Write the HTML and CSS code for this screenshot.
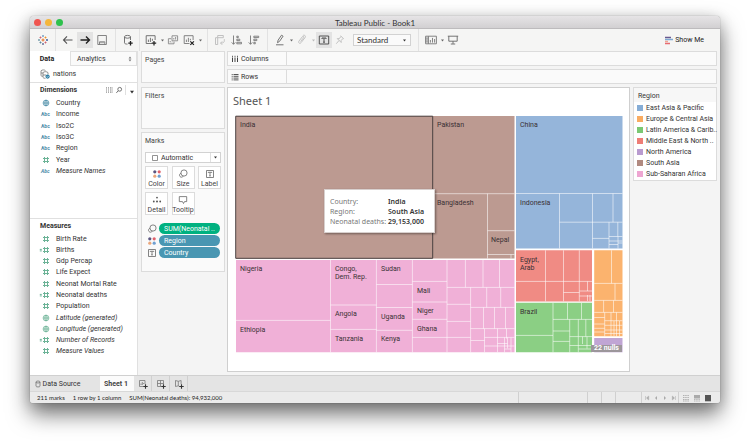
FILE: index.html
```html
<!DOCTYPE html>
<html lang="en">
<head>
<meta charset="utf-8">
<title>Tableau Public - Book1</title>
<link rel="stylesheet" href="styles.css">
</head>
<body>
<svg class="defs" aria-hidden="true">
  <symbol id="hash" viewBox="0 0 8 8"><path d="M2.500 1v6M5.500 1v6M1 2.500h6M1 5.500h6" fill="none" stroke="currentColor" stroke-width="1"/></symbol>
  <symbol id="eqhash" viewBox="0 0 11 8"><path d="M5.500 1v6M8.500 1v6M4 2.500h6M4 5.500h6M.8 3.400h2M.8 4.900h2" fill="none" stroke="currentColor" stroke-width="1"/></symbol>
  <symbol id="globe" viewBox="0 0 8 8"><g fill="none" stroke="currentColor" stroke-width=".7"><circle cx="4" cy="4" r="2.9"/><ellipse cx="4" cy="4" rx="1.3" ry="2.9"/><path d="M1 4h6M4 1v6"/></g></symbol>
  <symbol id="caret" viewBox="0 0 6 4"><path d="M1 .8h4L3 3.4z" fill="currentColor"/></symbol>
  <symbol id="dots" viewBox="0 0 10 10"><circle cx="2.8" cy="2.8" r="1.6" fill="#5b5580"/><circle cx="7.2" cy="2.8" r="1.6" fill="#e0616b"/><circle cx="2.8" cy="7.2" r="1.6" fill="#eba77c"/><circle cx="7.2" cy="7.2" r="1.6" fill="#6f9fd0"/></symbol>
  <symbol id="size" viewBox="0 0 10 10"><g fill="none" stroke="currentColor" stroke-width=".8"><circle cx="6" cy="4" r="3.1"/><path d="M2.9 4.3a2 2 0 1 0 2.4 2.8"/></g></symbol>
  <symbol id="label" viewBox="0 0 10 10"><path d="M1.500 1.500h7v7h-7zM3.300 4V3.300h3.400V4M5 3.300v3.600M4.200 6.900h1.600" fill="none" stroke="currentColor" stroke-width=".8"/></symbol>
  <symbol id="plus" viewBox="0 0 5 5"><path d="M2.500 .3v4.400M.3 2.500h4.400" stroke="#333" stroke-width="1.1"/></symbol>
</svg>

<div class="window">
  <header class="titlebar">
    <div class="lights"><span class="light close"></span><span class="light min"></span><span class="light max"></span></div>
    <h1>Tableau Public - Book1</h1>
  </header>

  <nav class="toolbar" aria-label="Toolbar">
    <div class="group home"><button type="button" aria-label="Start page"><svg viewBox="0 0 12 12"><g stroke-width=".9"><path d="M6 4.500v3M4.500 6h3" stroke="#e8762d" stroke-width="1.1"/><path d="M6 1v2M5 2h2" stroke="#6a9bc3"/><path d="M6 9v2M5 10h2" stroke="#5b6591"/><path d="M2 5v2M1 6h2" stroke="#7199a6"/><path d="M10 5v2M9 6h2" stroke="#2f5597"/><path d="M3.500 2.500v2M2.500 3.500h2" stroke="#d0606c"/><path d="M8.500 2.500v2M7.500 3.500h2" stroke="#eb912c"/><path d="M3.500 7.500v2M2.500 8.500h2" stroke="#59879b"/><path d="M8.500 7.500v2M7.500 8.500h2" stroke="#d0606c"/></g></svg></button></div>
    <div class="group spaced">
      <button type="button" aria-label="Undo"><svg viewBox="0 0 12 12"><path d="M10.500 6h-9M5 2.400L1.500 6 5 9.600" fill="none" stroke="#555" stroke-width="1.1"/></svg></button>
      <button type="button" class="on" aria-label="Redo"><svg viewBox="0 0 12 12"><path d="M1.500 6h9M7 2.400L10.500 6 7 9.600" fill="none" stroke="#222" stroke-width="1.4"/></svg></button>
      <button type="button" aria-label="Save"><svg viewBox="0 0 12 12"><path d="M1.800 1.500h8.600v9H1.800zM3.500 10.500V7.800h5.300v2.700M5 8v1.300M7 8v1.300" fill="none" stroke="#777" stroke-width=".9"/></svg></button>
    </div>
    <div class="group single"><button type="button" aria-label="New data source"><svg viewBox="0 0 12 12"><path d="M2.500 2.800v6c0 1 1.500 1.300 3 1.300M8.500 6V2.800" fill="none" stroke="#666" stroke-width=".9"/><ellipse cx="5.5" cy="2.8" rx="3" ry="1.4" fill="none" stroke="#666" stroke-width=".9"/><path d="M8.500 7v4.400M6.300 9.200h4.400" stroke="#222" stroke-width="1.3"/></svg></button></div>
    <div class="group sheets">
      <button type="button" aria-label="New worksheet"><svg viewBox="0 0 12 12"><path d="M7 9.500H1.200V1.700h8.900V6M3.400 8V5.600M5.400 8V3.800M7.400 6.800V4.800" fill="none" stroke="#666" stroke-width=".9"/><path d="M9 7v4.400M6.800 9.200h4.400" stroke="#222" stroke-width="1.2"/></svg></button>
      <button type="button" class="drop" aria-label="New worksheet options"><svg><use href="#caret"/></svg></button>
      <button type="button" aria-label="Duplicate"><svg viewBox="0 0 12 12"><path d="M5 6.800V1.800h5.600v5zM4.200 4.700H1.400v5.100H7V7.600M6.800 5.500V4M8.600 5.500V3M3.200 8.400V7M5 8.400V7.700" fill="none" stroke="#888" stroke-width=".9"/></svg></button>
      <button type="button" aria-label="Clear sheet"><svg viewBox="0 0 12 12"><path d="M6.500 9.500H1.200V1.700h8.900V6M3.400 8V5.600M5.400 8V3.800M7.400 6.300V4.800" fill="none" stroke="#777" stroke-width=".9"/><path d="M7.300 7.300l3.600 3.600M10.900 7.300l-3.600 3.600" stroke="#222" stroke-width="1.2"/></svg></button>
      <button type="button" class="drop" aria-label="Clear options"><svg><use href="#caret"/></svg></button>
    </div>
    <div class="group spaced">
      <button type="button" aria-label="Swap rows and columns"><svg viewBox="0 0 12 12"><path d="M1.500 3.700h2.200v6.800H1.500zM3.700 1.500h5.600v2.200H3.700zM10.300 5.200v1.500c0 1.600-1 2.400-3.600 2.400M8.200 7.400L6.500 9.100l1.700 1.700" fill="none" stroke="#bbb" stroke-width=".9"/></svg></button>
      <button type="button" aria-label="Sort ascending"><svg viewBox="0 0 12 12"><path d="M2.500 1.500v8.700M.7 8.400l1.800 1.900 1.800-1.900M5.800 2.200h1.500v1.400H5.800zM5.800 5.200h3v1.400h-3zM5.800 8.300h4.700v1.500H5.800z" fill="none" stroke="#777" stroke-width=".9"/></svg></button>
      <button type="button" aria-label="Sort descending"><svg viewBox="0 0 12 12"><path d="M2.500 1.500v8.700M.7 8.400l1.800 1.900 1.800-1.900M5.800 2.200h4.900v1.400H5.800zM5.800 5.200h3v1.400h-3zM5.800 8.300h1.500v1.500H5.800z" fill="none" stroke="#777" stroke-width=".9"/></svg></button>
    </div>
    <div class="group format">
      <button type="button" aria-label="Highlight"><svg viewBox="0 0 12 12"><path d="M3.500 8.700l.6-2.500 3.400-5 1.600 1-3.600 5.200zM2 10.800h7.500" fill="none" stroke="#666" stroke-width=".9"/></svg></button>
      <button type="button" class="drop" aria-label="Highlight options"><svg><use href="#caret"/></svg></button>
      <button type="button" aria-label="Group members"><svg viewBox="0 0 12 12"><path d="M4.600 7.500l3-3.800c.7-1-.5-1.800-1.200-1L3 7c-1.200 1.800.8 3.200 2 1.700l4-5c1.300-2-1-3.300-2.200-2" fill="none" stroke="#bbb" stroke-width=".9"/></svg></button>
      <button type="button" class="drop faint" aria-label="Group options"><svg><use href="#caret"/></svg></button>
      <button type="button" class="on" aria-label="Show mark labels"><svg viewBox="0 0 12 12"><path d="M1.300 2h9.400v8H1.300zM4 5V4h4v1M6 4v4.200M5 8.200h2" fill="none" stroke="#444" stroke-width=".9"/></svg></button>
      <button type="button" aria-label="Fix axes"><svg viewBox="0 0 12 12"><path d="M6.500 1.800l3.200 3M7 2.300L5.300 4.700l-2-.1 3.900 3.900-.1-2L9.200 4.300M5 6.500L2.300 9.700" fill="none" stroke="#bbb" stroke-width=".9"/></svg></button>
      <div class="fit"><select aria-label="Fit"><option>Standard</option></select><svg><use href="#caret"/></svg></div>
    </div>
    <div class="group view">
      <button type="button" aria-label="Show or hide cards"><svg viewBox="0 0 12 12"><path d="M.6 2.200h10.800v7.600H.6zM3.400 2.200v7.600M.6 4.100h2.800M.6 6h2.800M.6 7.900h2.800M5.400 8.600V6M7.500 8.600V3.900M9.600 8.600V5" fill="none" stroke="#777" stroke-width=".9"/></svg></button>
      <button type="button" class="drop" aria-label="Card options"><svg><use href="#caret"/></svg></button>
      <button type="button" aria-label="Presentation mode"><svg viewBox="0 0 12 12"><path d="M.8 2.200h10.400M1.800 2.200v5h8.400v-5M6 7.200v2.600M3.800 10h4.400" fill="none" stroke="#666" stroke-width=".9"/></svg></button>
    </div>
    <button type="button" class="showme"><svg viewBox="0 0 9 9"><path d="M1 1.500h6" stroke="#6a5a90" stroke-width="1.500"/><path d="M1 3.500h8" stroke="#7fa8d2" stroke-width="1.500"/><path d="M1 5.500h3" stroke="#f0a593" stroke-width="1.500"/><path d="M1 7.500h5" stroke="#e66a70" stroke-width="1.500"/></svg>Show Me</button>
  </nav>

  <div class="workspace">
    <aside class="data">
      <div class="tabs"><button type="button" class="active">Data</button><button type="button" class="analytics">Analytics<svg viewBox="0 0 4 6"><path d="M.6 2.600L2 .6l1.400 2zM.6 3.400L2 5.400l1.400-2z" fill="#777"/></svg></button></div>
      <div class="source"><svg viewBox="0 0 10 10"><path d="M1 1.800v4.600c0 .6.8.9 1.800.9M1 1.800C2 .6 4.700.6 5.600 1.800M3 3.600v4.800c.6.9 1.800.9 2.500.9M3 3.600c.9-1.200 4-1.200 5 0v1.800M1 4h2M3 6h3" fill="none" stroke="#777" stroke-width=".8"/><circle cx="7.6" cy="7.6" r="2.1" fill="#2f7fa5"/><path d="M6.600 7.600l.8.8 1.300-1.500" fill="none" stroke="#fff" stroke-width=".6"/></svg>nations</div>
      <section class="dims">
        <div class="head"><h2>Dimensions</h2><span class="tools"><button type="button" aria-label="View data"><svg viewBox="0 0 8 8"><path d="M1.500 1v6M3.500 1v6M5.500 1v6M7 1v6" stroke="#888" stroke-width=".7"/><path d="M1 3h6.500M1 5h6.500" stroke="#fff" stroke-width=".5"/></svg></button><button type="button" aria-label="Find field"><svg viewBox="0 0 8 8"><circle cx="4.700" cy="3.300" r="1.900" fill="none" stroke="#555" stroke-width=".8"/><path d="M3.300 4.800L1.400 6.800" stroke="#555" stroke-width=".9"/></svg></button><button type="button" class="menu" aria-label="Pane menu"><svg><use href="#caret"/></svg></button></span></div>
        <ul class="fields">
          <li><svg class="blue"><use href="#globe"/></svg>Country</li>
          <li><b>Abc</b>Income</li>
          <li><b>Abc</b>Iso2C</li>
          <li><b>Abc</b>Iso3C</li>
          <li><b>Abc</b>Region</li>
          <li><svg><use href="#hash"/></svg>Year</li>
          <li class="gen"><b>Abc</b>Measure Names</li>
        </ul>
      </section>
      <section class="measures">
        <div class="head"><h2>Measures</h2></div>
        <ul class="fields">
          <li><svg><use href="#hash"/></svg>Birth Rate</li>
          <li><svg class="wide"><use href="#eqhash"/></svg>Births</li>
          <li><svg><use href="#hash"/></svg>Gdp Percap</li>
          <li><svg><use href="#hash"/></svg>Life Expect</li>
          <li><svg><use href="#hash"/></svg>Neonat Mortal Rate</li>
          <li><svg class="wide"><use href="#eqhash"/></svg>Neonatal deaths</li>
          <li><svg><use href="#hash"/></svg>Population</li>
          <li class="gen"><svg><use href="#globe"/></svg>Latitude (generated)</li>
          <li class="gen"><svg><use href="#globe"/></svg>Longitude (generated)</li>
          <li class="gen"><svg class="wide"><use href="#eqhash"/></svg>Number of Records</li>
          <li class="gen"><svg><use href="#hash"/></svg>Measure Values</li>
        </ul>
      </section>
    </aside>

    <div class="cards">
      <section class="card pages"><h2>Pages</h2></section>
      <section class="card filters"><h2>Filters</h2></section>
      <section class="card marks">
        <h2>Marks</h2>
        <div class="type"><svg class="square" viewBox="0 0 6 6"><path d="M.5 .5h5v5h-5z" fill="none" stroke="#777" stroke-width=".8"/></svg><select aria-label="Mark type"><option>Automatic</option></select><span class="arrow"><svg><use href="#caret"/></svg></span></div>
        <div class="encodings">
          <button type="button"><svg><use href="#dots"/></svg>Color</button>
          <button type="button"><svg><use href="#size"/></svg>Size</button>
          <button type="button"><svg><use href="#label"/></svg>Label</button>
          <button type="button"><svg viewBox="0 0 10 10"><g fill="#555"><circle cx="5" cy="2.600" r=".9"/><circle cx="1.800" cy="6.500" r=".9"/><circle cx="5" cy="6.500" r="1"/><circle cx="8.200" cy="6.500" r=".9"/></g></svg>Detail</button>
          <button type="button"><svg viewBox="0 0 10 10"><path d="M1.300 1.600h7.400v5H6.500L5.500 8.500 4.500 6.600H1.300z" fill="none" stroke="#666" stroke-width=".8"/></svg>Tooltip</button>
        </div>
        <ul class="pills">
          <li><svg><use href="#size"/></svg><button type="button" class="pill green">SUM(Neonatal ..</button></li>
          <li><svg><use href="#dots"/></svg><button type="button" class="pill">Region</button></li>
          <li><svg><use href="#label"/></svg><button type="button" class="pill">Country</button></li>
        </ul>
      </section>
    </div>

    <main class="view-area">
      <div class="shelf"><span class="name"><svg viewBox="0 0 8 8"><path d="M1.500 2.500v4.500M4 2.500v4.500M6.500 2.500v4.500M1.500 .8v1M4 .8v1M6.500 .8v1" stroke="#444" stroke-width="1"/></svg>Columns</span></div>
      <div class="shelf"><span class="name"><svg viewBox="0 0 8 8"><path d="M2.500 1.500h5M2.500 3.300h5M2.500 5.100h5M2.500 6.900h5M.7 1.500h1M.7 3.300h1M.7 5.100h1M.7 6.900h1" stroke="#444" stroke-width=".9"/></svg>Rows</span></div>
      <div class="stage">
        <section class="sheet">
          <h2>Sheet 1</h2>
          <div class="chart">
            <svg class="treemap" viewBox="235 115 388 238" role="img" aria-label="Treemap of neonatal deaths by country">
              <path fill="#bc9a91" d="M236 116h278.500v142.500H236z"/>
              <path fill="#95b5da" d="M516 116h106.500v132.500H516z"/>
              <path fill="#f08b84" d="M516 250.300h76v51.200h-76z"/>
              <path fill="#8bcf84" d="M516 302.800h76v49.500h-76z"/>
              <path fill="#fbb36e" d="M594.200 250.300h28.300v86h-28.300z"/>
              <path fill="#c0a5d4" d="M594.200 338h28.300v14.300h-28.300z"/>
              <path fill="#f0b0d7" d="M236 260h278.500v92.300H236z"/>
              <g class="lines">
                <path d="M433 193.700h81.500M487.500 193.700v64.800M487.500 230.700h27M487.500 254.500h27M511 254.500v4"/>
                <path d="M516 193.500h106.500M559.500 193.500v55M559.500 222.200h63M592.500 193.500v55M613 193.500v28.700M609 222.200v26.300M592.500 238.400H609M617.800 222.200v14.300M609 236.500h13.500M609 241h13.500M609 244.500h9M618 236.500v12M618 243h4.500"/>
                <path d="M516 281.400h76M545.500 250.300v51M563.500 250.300v51M579.300 250.300v51M563.500 292.500h16M587.500 281.400v9.600M579.300 291h12.700M579.300 296h12.700M587.500 295v6M590 295v6"/>
                <path d="M516 335.400h37M553 302.800v49.500M553 319.400h39M567.500 302.800v16.600M581.500 302.800v16.600M569.700 319.400v33M553 331h16.700M553 341.400h16.700M578.300 319.400v17.200M585.800 319.400v17.200M569.700 336.600h22.300M578.300 336.600v15.700M582.500 336.600v7.400M587 336.600v12M569.700 345.500h22.300M578.300 349h13.700"/>
                <path d="M594.200 283.400h28.300M611.500 250.300v33.100M615 283.400v17M594.200 300.400h28.300M603.600 300.400v12M613.500 300.400v12M594.200 312.400h28.300M604.700 312.400v24M594.200 317.500h10.500M594.200 324h10.500M594.200 328.300h10.500M594.200 332h10.500M611 312.400v24M616.500 312.400v24M604.700 320.700h17.800M604.700 325.300h17.800M604.700 330h17.800M604.700 333.500h17.800M614 321v15M619.500 321v15"/>
                <path d="M330.500 260v92.300M236 320.400h94.500M376.400 260v92.300M330.500 305h46M330.500 329.400h46M412.400 260v92.300M376.400 284.500h36M376.400 307.500h36M376.400 330.300h36M447 260v92.300M412.400 281.400H447M412.400 302H447M412.400 319.300H447M412.400 337.400H447"/>
                <path d="M447 287.400h67.500M465.400 260v27.400M483 260v27.400M499.500 260v27.400M470.600 287.400v65M447 304.300h23.600M447 321.400h23.600M447 337.400h23.600M486.700 287.400v20M500.700 287.400v20M470.600 307.400h44M483.500 307.400v21.200M494.500 307.400v21.200M505.500 307.400v21.200M470.600 328.600h44M484.500 328.600v23.700M470.600 340.500h14M497.500 328.600v23.700M484.500 337.400h30M484.500 346h30M506.500 328.600v10M504.500 337.400v15M507.500 337.400v11M511 337.400v15M497.500 343.500h10M504.500 349h6.500"/>
              </g>
              <path class="selected" d="M235.700 116.200h197v142.100h-197z"/>
              <g class="labels">
                <text x="240" y="127">India</text><text x="437" y="127">Pakistan</text><text x="437" y="205">Bangladesh</text><text x="491" y="242">Nepal</text>
                <text x="520" y="127">China</text><text x="520" y="205">Indonesia</text>
                <text x="520" y="262">Egypt,</text><text x="520" y="270">Arab</text><text x="520" y="314">Brazil</text>
                <text x="240" y="271">Nigeria</text><text x="240" y="332">Ethiopia</text>
                <text x="335" y="271">Congo,</text><text x="335" y="279">Dem. Rep.</text><text x="335" y="316">Angola</text><text x="335" y="341">Tanzania</text>
                <text x="381" y="271">Sudan</text><text x="381" y="319">Uganda</text><text x="381" y="341">Kenya</text>
                <text x="417" y="293">Mali</text><text x="417" y="313">Niger</text><text x="417" y="331">Ghana</text>
              </g>
            </svg>
            <button type="button" class="nulls">22 nulls</button>
            <dl class="tooltip"><dt>Country:</dt><dd>India</dd><dt>Region:</dt><dd>South Asia</dd><dt>Neonatal deaths:</dt><dd>29,153,000</dd></dl>
          </div>
        </section>
        <aside class="legend">
          <h2>Region</h2>
          <ul>
            <li class="east">East Asia &amp; Pacific</li>
            <li class="europe">Europe &amp; Central Asia</li>
            <li class="latin">Latin America &amp; Carib..</li>
            <li class="middle">Middle East &amp; North ..</li>
            <li class="north">North America</li>
            <li class="south">South Asia</li>
            <li class="africa">Sub-Saharan Africa</li>
          </ul>
        </aside>
      </div>
    </main>
  </div>

  <nav class="sheetbar" aria-label="Sheets">
    <button type="button" class="ds"><svg viewBox="0 0 6 8"><path d="M1 2v4.200c0 1 4 1 4 0V2" fill="none" stroke="#666" stroke-width=".7"/><ellipse cx="3" cy="2" rx="2" ry="1" fill="none" stroke="#666" stroke-width=".7"/></svg>Data Source</button>
    <button type="button" class="current">Sheet 1</button>
    <button type="button" class="add" aria-label="New worksheet"><svg viewBox="0 0 10 10"><path d="M5.500 7.500H1.500v-6h5.500V5M3 6V4.500M4.300 6V3M5.600 5V4" fill="none" stroke="#777" stroke-width=".8"/><use href="#plus" x="5" y="5" width="5" height="5"/></svg></button>
    <button type="button" class="add" aria-label="New dashboard"><svg viewBox="0 0 10 10"><path d="M5.500 7.500H1.500v-6h6V5M4.500 1.500v6M1.500 4.500h6" fill="none" stroke="#777" stroke-width=".8"/><use href="#plus" x="5" y="5" width="5" height="5"/></svg></button>
    <button type="button" class="add" aria-label="New story"><svg viewBox="0 0 10 10"><path d="M5.500 7.500L4.300 6.800 1.500 7.500v-6l2.800.8 2.800-.8V5M4.300 2.300v4.500" fill="none" stroke="#777" stroke-width=".8"/><use href="#plus" x="5" y="5" width="5" height="5"/></svg></button>
  </nav>

  <footer class="status">
    <span>211 marks</span><span>1 row by 1 column</span><span>SUM(Neonatal deaths): 94,932,000</span>
    <div class="slots"><i class="long"></i><i></i><i></i><i class="mid"></i></div>
    <div class="pager">
      <button type="button" aria-label="First"><svg viewBox="0 0 6 6"><path d="M1.500 1v4M4.700 1L2.500 3l2.200 2z" fill="#aaa" stroke="#aaa" stroke-width=".5"/></svg></button>
      <button type="button" aria-label="Previous"><svg viewBox="0 0 6 6"><path d="M4 1L2 3l2 2z" fill="#aaa"/></svg></button>
      <button type="button" aria-label="Next"><svg viewBox="0 0 6 6"><path d="M2 1l2 2-2 2z" fill="#aaa"/></svg></button>
      <button type="button" aria-label="Last"><svg viewBox="0 0 6 6"><path d="M4.500 1v4M1.300 1l2.200 2-2.200 2z" fill="#aaa" stroke="#aaa" stroke-width=".5"/></svg></button>
    </div>
    <div class="modes">
      <button type="button" aria-label="Sheet sorter"><svg viewBox="0 0 8 8"><path d="M1 1.500h6M1 3.500h6M1 5.500h6M1 7h6" stroke="#aaa" stroke-width=".9" stroke-dasharray="1.500 .7"/></svg></button>
      <button type="button" aria-label="Filmstrip"><svg viewBox="0 0 8 8"><path d="M1 1h6v3.500H1z" fill="#aaa"/><path d="M1 5.500h6M1 7h6" stroke="#aaa" stroke-width=".8" stroke-dasharray="1.500 .7"/></svg></button>
      <button type="button" aria-label="Tabs"><svg viewBox="0 0 8 8"><path d="M1 1h6v6.300H1z" fill="#555"/></svg></button>
    </div>
  </footer>
</div>
</body>
</html>
```
FILE: styles.css
```css
* { box-sizing: border-box; margin: 0; padding: 0; }
body {
  display: flex;
  min-height: 100vh;
  padding: 16px 30px 43px;
  background: #fff;
  color: #333;
  font: 7px/10px Roboto, "Liberation Sans", sans-serif;
  overflow: hidden;
}
button, select { font: inherit; color: inherit; border: 0; background: none; appearance: none; }
ul { list-style: none; }
h1, h2 { font: inherit; }
svg { display: block; flex: none; }
.defs { position: absolute; width: 0; height: 0; }

.window {
  flex: 1;
  min-width: 0;
  display: flex;
  flex-direction: column;
  border-radius: 4px 4px 3px 3px;
  background: #f4f4f4;
  box-shadow: 0 0 1px rgba(0, 0, 0, .5), 0 11px 22px rgba(0, 0, 0, .55), 0 2px 14px rgba(0, 0, 0, .15);
}
.titlebar {
  position: relative;
  height: 13px;
  display: flex;
  align-items: center;
  justify-content: center;
  border-bottom: 1px solid #bdbbbd;
  border-radius: 4px 4px 0 0;
  background: linear-gradient(#e6e4e6, #d2d0d2);
}
.titlebar h1 { font: 8px/10px Lato, sans-serif; color: #333; padding-top: 1px; }
.lights { position: absolute; left: 4px; top: 3px; display: flex; gap: 4px; }
.light { width: 7px; height: 7px; border-radius: 50%; }
.close { background: #f0544f; }
.min { background: #f5b63a; }
.max { background: #2ec14c; }

.toolbar { height: 22px; display: flex; align-items: stretch; background: #f5f5f4; }
.group { display: flex; align-items: center; border-right: 1px solid #e2e2e2; padding: 0 4px; }
.group.home { width: 26px; justify-content: center; }
.group.single { width: 24px; }
.group.sheets { padding: 0 3px; width: 68px; }
.group.spaced { width: 60px; gap: 1px; }
.group.format { width: 151px; }
.group.view { border: 0; }
.toolbar button { display: flex; align-items: center; justify-content: center; width: 16px; height: 16px; flex: none; }
.toolbar button svg { width: 12px; height: 12px; }
.toolbar button.on { background: #e3e3e3; }
.toolbar button.drop { width: 6px; color: #666; }
.toolbar button.drop svg { width: 5px; height: 3px; }
.toolbar button.faint { color: #bbb; }
.fit {
  display: flex;
  align-items: center;
  width: 58px;
  height: 12px;
  margin-left: 5px;
  padding: 0 3px;
  border: 1px solid #d2d2d2;
  background: #fafafa;
}
.fit select { flex: 1; font: 8px/10px Lato, sans-serif; }
.fit svg { width: 5px; height: 3px; }
.toolbar .showme { width: auto; margin: 3px 16px 0 auto; gap: 2px; color: #222; }
.toolbar .showme svg { width: 9px; height: 9px; }

.workspace { flex: 1; display: flex; min-height: 0; padding-right: 3px; }
.data { width: 108px; display: flex; flex-direction: column; border-right: 1px solid #e0e0e0; background: #fff; }
.tabs { display: flex; height: 15px; }
.tabs button { width: 40px; padding-right: 6px; text-align: center; }
.tabs .active { font-weight: 700; color: #222; }
.tabs .analytics {
  flex: 1;
  display: flex;
  align-items: center;
  justify-content: space-between;
  padding: 0 4px 0 6px;
  border: 1px solid #e0e0e0;
  background: #fafafa;
}
.tabs svg { width: 4px; height: 6px; }
.source { display: flex; align-items: center; gap: 3px; height: 16px; padding-left: 10px; }
.source svg { width: 10px; height: 10px; }
.dims { height: 136px; border-top: 1px solid #e0e0e0; padding-bottom: 41px; display: flex; flex-direction: column; }
.measures { flex: 1; border-top: 1px solid #e0e0e0; padding-bottom: 18px; display: flex; flex-direction: column; }
.head { display: flex; align-items: center; justify-content: space-between; height: 14px; padding: 0 2px 0 10px; }
.head h2 { font-weight: 700; color: #333; }
.tools { display: flex; align-items: center; gap: 2px; }
.tools svg { width: 8px; height: 8px; }
.tools .menu { height: 10px; padding: 3px 0 0 3px; border-left: 1px solid #e0e0e0; }
.tools .menu svg { width: 6px; height: 4px; }
.fields { flex: 1; display: grid; grid-auto-rows: 1fr; }
.fields li { position: relative; display: flex; align-items: center; padding-left: 26px; white-space: nowrap; }
.fields svg, .fields b { position: absolute; left: 12px; width: 8px; height: 8px; color: #6cb397; }
.fields .wide { left: 9px; width: 11px; }
.fields .blue { color: #4a8ca8; }
.fields b { left: 11px; width: auto; font-size: 5px; line-height: 8px; color: #4a8ca8; }
.gen { font-style: italic; }

.cards { width: 84px; margin: 0 2px 0 3px; display: flex; flex-direction: column; gap: 4px; }
.card { border: 1px solid #dcdcdc; background: #fafafa; padding: 3px; }
.card h2 { color: #444; }
.pages { height: 32px; }
.filters { height: 42px; }
.marks { height: 140px; margin-top: -1px; }
.type { display: flex; align-items: center; height: 11px; margin-top: 6px; padding-left: 6px; border: 1px solid #d2d2d2; background: #fff; }
.square { width: 6px; height: 6px; }
.type select { flex: 1; min-width: 0; padding-left: 3px; }
.arrow { display: flex; align-items: center; height: 100%; padding: 0 2px; border-left: 1px solid #e0e0e0; }
.arrow svg { width: 5px; height: 3px; }
.encodings { display: grid; grid-template-columns: repeat(3, 23px); justify-content: space-between; gap: 3px; margin-top: 3px; }
.encodings button {
  display: flex;
  flex-direction: column;
  align-items: center;
  justify-content: flex-end;
  gap: 1px;
  height: 23px;
  border: 1px solid #dcdcdc;
  background: #fff;
  line-height: 8px;
  color: #444;
}
.encodings svg { width: 10px; height: 10px; color: #666; }
.pills { display: grid; gap: 1px; margin-top: 8px; }
.pills li { display: flex; align-items: center; gap: 2px; padding: 0 2px; }
.pills svg { width: 10px; height: 10px; color: #666; }
.pill { flex: 1; height: 11px; margin-right: -1px; padding: 0 5px; border-radius: 6px; background: #4996b2; color: #fff; text-align: left; white-space: nowrap; }
.pill.green { background: #00b180; }

.view-area { flex: 1; min-width: 0; display: flex; flex-direction: column; gap: 3px; }
.shelf { height: 15px; display: flex; border: 1px solid #dcdcdc; background: #fafafa; }
.name { display: flex; align-items: center; gap: 2px; width: 59px; padding-left: 3px; border-right: 1px solid #dcdcdc; }
.name svg { width: 8px; height: 8px; }
.stage { flex: 1; display: flex; align-items: flex-start; gap: 3px; padding-bottom: 3px; }
.sheet { flex: 1; min-width: 0; align-self: stretch; border: 1px solid #cfcfcf; background: #fff; padding: 3px 6px 0 7px; }
.sheet h2 { height: 24px; margin-left: -2px; font: 11px/20px "Noto Sans", sans-serif; color: #555; }
.chart { position: relative; }
.treemap { width: 100%; height: auto; }
.lines { fill: none; stroke: rgba(255, 255, 255, .7); stroke-width: .8; }
.selected { fill: none; stroke: #4a4040; stroke-width: 1; }
.labels { font-size: 7px; fill: #3a3034; }
.nulls { position: absolute; right: 1px; bottom: 1px; width: 31px; height: 7px; background: #9c969b; color: #fff; font-weight: 700; line-height: 7px; }
.tooltip {
  position: absolute;
  left: 89px;
  top: 74px;
  display: grid;
  grid-template-columns: 58px auto;
  width: 111px;
  padding: 7px 5px 5px;
  border: 1px solid #d8d0ce;
  background: #fff;
  box-shadow: 1px 1px 2px rgba(0, 0, 0, .4);
  font: 7px/10px "Noto Sans", sans-serif;
  white-space: nowrap;
}
.tooltip dt { color: #777; }
.tooltip dd { font-weight: 600; color: #333; }
.legend { width: 84px; border: 1px solid #dcdcdc; background: #fff; padding-bottom: 1px; }
.legend h2 { height: 14px; padding: 3px 4px 0; background: #f7f7f7; }
.legend li { display: flex; align-items: center; gap: 3px; height: 11px; padding-left: 3px; white-space: nowrap; }
.legend li::before { content: ""; flex: none; width: 6px; height: 6px; background: var(--swatch); }
.east { --swatch: #86add6; }
.europe { --swatch: #f9ac62; }
.latin { --swatch: #7bc873; }
.middle { --swatch: #ee7d76; }
.north { --swatch: #b99bd0; }
.south { --swatch: #b18a80; }
.africa { --swatch: #eea6d2; }

.sheetbar { display: flex; height: 16px; border-top: 1px solid #d0d0d0; background: #e4e4e4; }
.sheetbar button { display: flex; align-items: center; justify-content: center; }
.ds { width: 70px; gap: 2px; padding-right: 15px; }
.ds svg { width: 6px; height: 8px; }
.sheetbar .current { width: 34px; padding-right: 2px; background: #fbfbfb; font-weight: 700; color: #444; }
.add { width: 18px; border-right: 1px solid #d0d0d0; }
.add svg { width: 10px; height: 10px; }
.status { display: flex; align-items: center; gap: 8px; height: 12px; padding-left: 7px; border-top: 1px solid #d8d8d8; border-radius: 0 0 3px 3px; background: #ebebeb; font: 6px/8px Lato, sans-serif; color: #222; white-space: nowrap; }
.slots, .pager, .modes { display: flex; align-self: stretch; align-items: center; }
.slots { margin-left: auto; margin-right: -8px; }
.slots i { align-self: stretch; width: 14px; border-left: 1px solid #d0d0d0; }
.slots .long { width: 69px; }
.slots .mid { width: 26px; }
.pager { gap: 3px; width: 37px; justify-content: center; margin-right: -8px; border-left: 1px solid #d0d0d0; }
.pager svg { width: 6px; height: 6px; }
.modes { gap: 3px; width: 42px; padding-left: 3px; border-left: 1px solid #d0d0d0; }
.modes svg { width: 8px; height: 8px; }
```
